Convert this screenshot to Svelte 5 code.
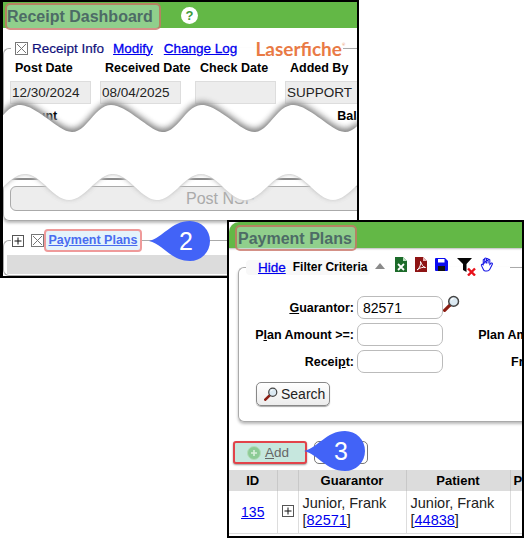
<script lang="ts">
	// torn paper edges: sine waves drawn over the first window
	function tornPath() {
		const top = (x: number) => {
			// the crests lean left a little, as in a hand-drawn tear
			const t = (2 * Math.PI * (x - 20)) / 91;
			return 118.5 - 13.5 * Math.cos(t - 0.24 * (1 - Math.cos(t)));
		};
		const bottom = (x: number) => 187 - 13 * Math.cos((2 * Math.PI * (x - 25)) / 88);
		let d = `M0 ${top(0).toFixed(1)}`;
		for (let x = 3; x <= 360; x += 3) d += ` L${x} ${top(x).toFixed(1)}`;
		for (let x = 360; x >= 0; x -= 3) d += ` L${x} ${bottom(x).toFixed(1)}`;
		return d + ' Z';
	}

	const receiptFields = [
		{ label: 'Post Date', value: '12/30/2024' },
		{ label: 'Received Date', value: '08/04/2025' },
		{ label: 'Check Date', value: '' },
		{ label: 'Added By', value: 'SUPPORT' }
	];

	const callouts = [
		{ n: 2, x: 149, y: 221 },
		{ n: 3, x: 304, y: 431 }
	];
</script>

{#snippet checkbox()}
	<svg class="box" width="13" height="13" viewBox="0 0 13 13">
		<rect x="0.5" y="0.5" width="12" height="12" fill="#fff" stroke="#777" />
		<path d="M2 2 L11 11 M11 2 L2 11" stroke="#777" fill="none" />
	</svg>
{/snippet}

{#snippet plus()}
	<svg class="box" width="12" height="12" viewBox="0 0 12 12">
		<rect x="0.5" y="0.5" width="11" height="11" fill="#fff" stroke="#555" />
		<path d="M6 2.5 V9.5 M2.5 6 H9.5" stroke="#111" fill="none" />
	</svg>
{/snippet}

{#snippet lens(size: number)}
	<svg width={size} height={size} viewBox="0 0 16 16">
		<path d="M6.5 9.5 L1.5 14.5" stroke="#8c1d12" stroke-width="3" stroke-linecap="round" />
		<circle cx="10" cy="6" r="4.6" fill="#dbe9f2" stroke="#444" stroke-width="1.4" />
		<path d="M7.8 5 A2.6 2.6 0 0 1 10 3.2" stroke="#fff" fill="none" />
	</svg>
{/snippet}

<div class="stage">
	<section class="window receipt">
		<header class="bar">
			<h1 class="title">Receipt Dashboard</h1>
			<span class="help">?</span>
		</header>

		<fieldset class="panel">
			<legend class="receipt-legend">
				{@render checkbox()}
				<span class="info">Receipt Info</span>
				<a href="#modify">Modify</a>
				<a href="#log">Change Log</a>
				<span class="logo">Laserfiche<sup>®</sup></span>
			</legend>
			<div class="date-grid">
				{#each receiptFields as field}
					<span class="date-label">{field.label}</span>
				{/each}
				{#each receiptFields as field}
					<div class="readonly">{field.value}</div>
				{/each}
			</div>
			<div class="amounts">
				<span>Amount</span>
				<span>Balance</span>
			</div>
			<div class="rule"></div>
			<button class="post">Post NSF</button>
		</fieldset>

		<fieldset class="panel plans-link">
			<legend class="plans-legend">
				{@render plus()}
				{@render checkbox()}
				<a class="marked" href="#plans">Payment Plans</a>
			</legend>
			<div class="grey-bar"></div>
		</fieldset>
	</section>

	<svg class="torn" width="524" height="538">
		<path d={tornPath()} fill="#fff" />
	</svg>

	<section class="window plans">
		<header class="bar">
			<h2 class="title">Payment Plans</h2>
		</header>

		<fieldset class="panel filter">
			<legend class="filter-legend">
				<span class="chip">
					<a href="#hide">Hide</a>
					<b>Filter Criteria</b>
				</span>
				<svg class="caret" width="10" height="6" viewBox="0 0 10 6"><path d="M5 0 L10 6 H0 Z" fill="#8a8a8a" /></svg>
				<svg class="tool" width="12" height="15" viewBox="0 0 12 15">
					<path d="M0 0 H8 L12 4 V15 H0 Z" fill="#1c6b2a" />
					<path d="M8 0 L12 4 H8 Z" fill="#bfe3c4" />
					<path d="M3 7 L9 13 M9 7 L3 13" stroke="#fff" stroke-width="1.8" />
				</svg>
				<svg class="tool" width="12" height="15" viewBox="0 0 12 15">
					<path d="M0 0 H8 L12 4 V15 H0 Z" fill="#8e1414" />
					<path d="M8 0 L12 4 H8 Z" fill="#e9b9b9" />
					<path d="M2 13 C5 11 6 7 5.5 4.5 C7 8 8 10 10.5 10.5 C8 10 5 10.5 2 13 Z" fill="none" stroke="#fff" stroke-width="1" />
				</svg>
				<svg class="tool" width="13" height="13" viewBox="0 0 13 13">
					<path d="M1 0 H10 L13 3 V12 Q13 13 12 13 H1 Q0 13 0 12 V1 Q0 0 1 0 Z" fill="#0a0af0" />
					<rect x="3" y="1" width="6.5" height="3.5" fill="#fff" />
					<rect x="3" y="8" width="7" height="5" fill="#111" />
				</svg>
				<svg class="tool funnel" width="20" height="18" viewBox="0 0 20 18">
					<path d="M0 0 H15 L9.5 6 V14 L6 12 V6 Z" fill="#050505" />
					<path d="M11 10.5 L18 17.5 M18 10.5 L11 17.5" stroke="#e8101a" stroke-width="2.4" />
				</svg>
				<svg class="tool hand" width="14" height="15" viewBox="0 0 14 16">
					<path d="M3 9 V3 Q3.8 2 4.6 3 V7 M4.6 3 V1.5 Q5.5 0.5 6.4 1.5 V7 M6.4 2 Q7.3 1 8.2 2 V7 M8.2 3 Q9.2 2 10 3 V8 L11.5 6.5 Q13 6 12.8 7.5 L10 13 Q9 15 7 15 H5 Q3.5 15 3 13 L1 9 Q0.8 7.5 2 8 Z" fill="#fff" stroke="#1414e6" stroke-width="1.1" />
				</svg>
			</legend>

			<div class="criteria">
				<label for="guarantor"><u>G</u>uarantor:</label>
				<div class="with-lens">
					<input id="guarantor" value="82571" />
					<span class="lens-icon">{@render lens(17)}</span>
				</div>
				<span></span>

				<label for="amount">P<u>l</u>an Amount &gt;=:</label>
				<input id="amount" />
				<label for="amount-to">Plan Amount &lt;=:</label>

				<label for="receipt">Recei<u>p</u>t:</label>
				<input id="receipt" />
				<label for="amount-to">From Date:</label>
			</div>

			<button class="search">{@render lens(14)} Search</button>
		</fieldset>

		<div class="actions">
			<button class="add">
				<svg width="14" height="14" viewBox="0 0 14 14">
					<circle cx="7" cy="7" r="6.5" fill="#8ccb95" stroke="#b4dcb9" />
					<path d="M7 4 V10 M4 7 H10" stroke="#d9f0dc" stroke-width="1.6" />
				</svg>
				<span><u>A</u>dd</span>
			</button>
			<button class="hidden-action"></button>
		</div>

		<table>
			<colgroup>
				<col class="c-id" />
				<col class="c-exp" />
				<col class="c-name" />
				<col class="c-pat" />
				<col />
			</colgroup>
			<thead>
				<tr>
					<th>ID</th>
					<th></th>
					<th>Guarantor</th>
					<th>Patient</th>
					<th class="last">Plan</th>
				</tr>
			</thead>
			<tbody>
				<tr>
					<td class="center"><a href="#135">135</a></td>
					<td class="center">{@render plus()}</td>
					<td>Junior, Frank<br />[<a href="#82571">82571</a>]</td>
					<td>Junior, Frank<br />[<a href="#44838">44838</a>]</td>
					<td></td>
				</tr>
			</tbody>
		</table>
	</section>

	{#each callouts as c}
		<svg class="callout" style="left: {c.x}px; top: {c.y}px" width="62" height="40" viewBox="0 0 62 40">
			<path d="M0 20 C14 17 22 0 41 0 A20 20 0 0 1 41 40 C22 40 14 23 0 20 Z" fill="#4263f7" />
			<text x="37" y="29" text-anchor="middle">{c.n}</text>
		</svg>
	{/each}
</div>

<style>
	:global(body) {
		background: #fff;
	}

	.stage {
		position: relative;
		width: 524px;
		height: 538px;
		overflow: hidden;
		background: #fff;
		font-family: 'Liberation Sans', Arial, sans-serif;
		font-size: 14px;
		color: #000;
	}

	/* the two screenshots sit on a free canvas */
	.window {
		position: absolute;
		box-sizing: border-box;
		overflow: hidden;
		background: #fff;
		border: 2px solid #000;
	}

	.receipt {
		left: 0;
		top: 0;
		width: 359px;
		height: 278px;
		border-left-width: 3px;
	}

	.plans {
		left: 227px;
		top: 220px;
		width: 297px;
		height: 318px;
	}

	.bar {
		display: flex;
		align-items: center;
		background: #63b846;
	}

	.receipt .bar {
		height: 26px;
		margin-left: -1px;
	}

	.plans .bar {
		height: 26px;
		border-top-left-radius: 10px;
		box-shadow: 0 1px 2px #bbb;
	}

	.title {
		box-sizing: border-box;
		margin: 0;
		height: 27px;
		line-height: 23px;
		font-size: 16px;
		font-weight: bold;
		color: #4d6b66;
		background: rgba(190, 230, 210, 0.5);
		border: 2px solid rgba(205, 80, 70, 0.6);
		border-radius: 5px;
		align-self: flex-start;
		white-space: nowrap;
	}

	.receipt .title {
		width: 156px;
		margin: 1px 0 0 3px;
		padding-left: 0;
	}

	.plans .title {
		width: 122px;
		margin: 3px 0 0 6px;
		padding-left: 1px;
		height: 26px;
	}

	.help {
		width: 17px;
		height: 17px;
		margin-left: 20px;
		border-radius: 50%;
		background: #fff;
		color: #3f9a3a;
		font-size: 13px;
		font-weight: bold;
		line-height: 17px;
		text-align: center;
	}

	.panel {
		margin: 0;
		min-width: 0;
		padding: 0;
		border: 1px solid #aaa;
		border-radius: 6px;
	}

	.receipt > .panel {
		width: 380px;
		box-sizing: border-box;
	}

	.receipt > .panel:first-of-type {
		margin-top: 10px;
		padding: 0 0 9px 6px;
		box-shadow: 0 2px 3px #bbb;
		border-right: none;
	}

	legend {
		padding: 0;
		height: 20px;
		display: flex;
		align-items: center;
		white-space: nowrap;
	}

	a {
		color: #0000ee;
		text-decoration: underline;
	}

	.box {
		flex: none;
	}

	.receipt-legend {
		margin-left: 1px;
		padding: 0 3px 0 4px;
		width: 332px;
		box-sizing: border-box;
	}

	.info {
		margin: 0 9px 0 4px;
		color: #10107a;
		font-size: 13.5px;
		-webkit-text-stroke: 0.2px #10107a;
	}

	.receipt-legend a {
		margin-right: 11px;
		font-size: 13.5px;
		-webkit-text-stroke: 0.3px #0000ee;
	}

	.logo {
		margin-left: 7px;
		font-family: Lato, 'Open Sans', sans-serif;
		font-size: 19px;
		font-weight: 700;
		color: #e97a45;
	}

	.logo sup {
		font-size: 4px;
		vertical-align: 10px;
		font-weight: 400;
	}

	.date-grid {
		display: grid;
		grid-template-columns: 90px 95px 90px 90px;
		grid-template-rows: 20px 23px;
		row-gap: 3px;
	}

	.date-label {
		padding-left: 5px;
		font-size: 12.5px;
		font-weight: bold;
		line-height: 20px;
		white-space: nowrap;
	}

	.readonly {
		box-sizing: border-box;
		width: 81px;
		height: 23px;
		padding-left: 1px;
		background: #ededed;
		border: 1px solid #ddd;
		font-size: 13.5px;
		line-height: 21px;
		color: #222;
	}

	.date-grid .readonly:last-child {
		width: 90px;
	}

	.amounts {
		display: flex;
		gap: 280px;
		margin-top: 3px;
		height: 18px;
		font-size: 12.5px;
		font-weight: bold;
		line-height: 18px;
		white-space: nowrap;
	}

	.rule {
		margin-top: 53px;
		height: 2px;
		background: #888;
	}

	.post {
		display: block;
		box-sizing: border-box;
		width: 400px;
		height: 25px;
		margin-top: 6px;
		padding: 0;
		border: 1px solid #aaa;
		border-radius: 6px;
		background: #ededed;
		color: #aaa;
		font-family: inherit;
		font-size: 16px;
		text-align: left;
		text-indent: 175px;
	}

	.plans-link {
		margin-top: 8px;
		height: 47px;
		border-right: none;
		padding-left: 3px;
	}

	.plans-legend {
		height: 23px;
		margin-left: 4px;
		padding-left: 1px;
		gap: 7px;
	}

	.marked {
		box-sizing: border-box;
		display: block;
		width: 98px;
		height: 23px;
		margin-left: -7px;
		line-height: 19px;
		text-align: center;
		font-size: 12.5px;
		font-weight: bold;
		color: #4a6cf0;
		background: #e4f3fb;
		border: 2px solid #ef9a9a;
		border-radius: 4px;
	}

	.grey-bar {
		height: 19px;
		margin-top: 3px;
		background: #dcdcdc;
	}

	.torn {
		position: absolute;
		left: 0;
		top: 0;
		pointer-events: none;
		filter: drop-shadow(0 -3px 3px #808080) drop-shadow(0 1px 1px #e8e8e8);
		clip-path: inset(0 167px 0 3px);
	}

	.filter {
		box-sizing: border-box;
		width: 420px;
		height: 165px;
		margin: 9px 0 0 9px;
		border-right: none;
		box-shadow: 0 2px 3px #bbb;
	}

	.filter-legend {
		margin-left: 7px;
		padding-right: 8px;
		height: 20px;
	}

	.chip {
		display: flex;
		align-items: center;
		height: 15px;
		padding: 0 3px 0 12px;
		gap: 7px;
		background: #f8f8f8;
		border-radius: 4px;
	}

	.chip a {
		font-size: 13.5px;
		-webkit-text-stroke: 0.3px #0000ee;
	}

	.chip b {
		font-size: 12px;
	}

	.caret {
		margin: 0 10px 3px 5px;
	}

	.tool {
		margin: 0 8px 5px 0;
	}

	.funnel {
		margin: 0 3px 0 1px;
	}

	.criteria {
		display: grid;
		grid-template-columns: 118px 86px 137px;
		grid-auto-rows: 23px;
		row-gap: 4px;
		align-items: center;
		margin-top: 19px;
	}

	label {
		text-align: right;
		font-size: 12.5px;
		font-weight: bold;
		padding-right: 3px;
		white-space: nowrap;
	}

	.with-lens {
		position: relative;
		height: 23px;
	}

	.lens-icon {
		position: absolute;
		left: 86px;
		top: -1px;
	}

	input {
		box-sizing: border-box;
		width: 86px;
		height: 23px;
		padding: 0 5px;
		border: 1px solid #bbb;
		border-radius: 7px;
		font-family: inherit;
		font-size: 14px;
		color: #000;
		outline: none;
	}

	.search {
		display: flex;
		align-items: center;
		gap: 3px;
		box-sizing: border-box;
		width: 74px;
		height: 24px;
		margin: 9px 0 0 17px;
		padding: 0 0 0 7px;
		background: linear-gradient(#fff, #ececec);
		border: 1px solid #888;
		border-radius: 5px;
		box-shadow: 0 1px 1px #aaa;
		font-family: inherit;
		font-size: 14px;
		color: #222;
	}

	.actions {
		display: flex;
		gap: 7px;
		margin: 19px 0 0 4px;
	}

	.actions button {
		box-sizing: border-box;
		height: 23px;
		font-family: inherit;
		font-size: 13.5px;
	}

	.add {
		display: flex;
		align-items: center;
		gap: 4px;
		width: 74px;
		padding: 0 0 0 12px;
		background: #c6e7de;
		border: 2px solid #e2434a;
		border-radius: 3px;
		box-shadow: 0 1px 2px #999;
		color: #666;
	}

	.hidden-action {
		width: 54px;
		background: #fff;
		border: 1px solid #777;
		border-radius: 5px;
	}

	table {
		table-layout: fixed;
		width: 340px;
		margin-top: 6px;
		border-collapse: collapse;
		font-size: 14.5px;
	}

	.c-id {
		width: 48px;
	}

	.c-exp {
		width: 21px;
	}

	.c-name {
		width: 108px;
	}

	.c-pat {
		width: 104px;
	}

	th {
		height: 21px;
		padding: 0;
		background: #dcdcdc;
		border-right: 1px solid #c8c8c8;
		font-size: 13px;
		text-align: center;
	}

	th.last {
		padding-left: 3px;
		text-align: left;
	}

	td {
		height: 42px;
		padding: 0 0 0 4px;
		border-right: 1px solid #ddd;
		border-bottom: 1px solid #ddd;
		color: #222;
		line-height: 17px;
		vertical-align: middle;
	}

	td.center {
		padding: 0;
		text-align: center;
		font-size: 14px;
	}

	.callout {
		position: absolute;
	}

	.callout text {
		fill: #fff;
		font-size: 25px;
		font-family: 'Liberation Sans', Arial, sans-serif;
	}
</style>
